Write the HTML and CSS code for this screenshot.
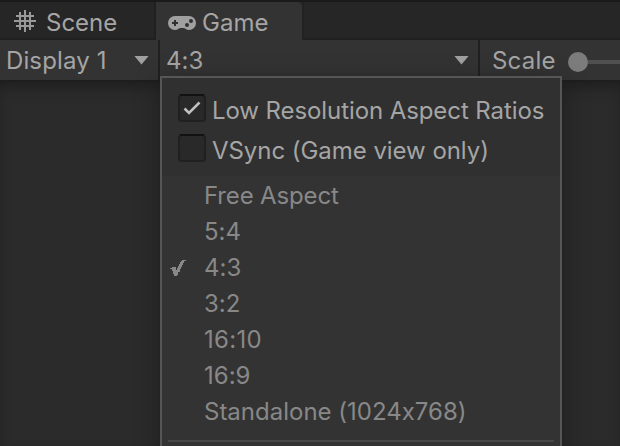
FILE: index.html
```html
<!DOCTYPE html>
<html lang="en">
<head>
<meta charset="utf-8">
<title>Game view</title>
<link rel="stylesheet" href="styles.css">
</head>
<body>
<div class="window">
  <div class="tabs">
    <div class="tab tab-scene">
      <svg class="icon-grid" width="22" height="22" viewBox="0 0 22 22"><path d="M6 2v18M11 0v22M16 2v18M2 6h18M0 11h22M2 16h18" /></svg>
      <span class="scene-label">Scene</span>
    </div>
    <div class="tab tab-game">
      <svg class="icon-pad" width="28" height="14" viewBox="0 0 28 14">
        <path class="pad" d="M7 0H21A7 7 0 0 1 21 14Q19 14 17.5 12.8Q16.5 12 15.5 12H12.5Q11.500 12 10.500 12.8Q9 14 7 14A7 7 0 0 1 7 0Z"/>
        <path class="cross" d="M7 4v6M4 7h6"/>
        <circle class="dot" cx="23" cy="5" r="2"/><circle class="dot" cx="19" cy="9" r="2"/>
      </svg>
      <span class="game-label">Game</span>
    </div>
    <div class="tab-rest"></div>
  </div>
  <div class="toolbar">
    <div class="drop display"><span class="display-label">Display 1</span><i class="arrow"></i></div>
    <div class="drop aspect"><span class="aspect-label">4:3</span><i class="arrow"></i></div>
    <div class="scale"><span class="scale-label">Scale</span><i class="knob"></i><i class="track"></i></div>
  </div>
  <div class="view"></div>
  <div class="popup">
    <div class="options">
      <div class="option"><i class="box"><svg width="28" height="28" viewBox="0 0 28 28"><path d="M6.500 14.500L11 19L21.500 8.500"/></svg></i><span class="low">Low Resolution Aspect Ratios</span></div>
      <div class="option"><i class="box"></i><span class="vsync">VSync (Game view only)</span></div>
    </div>
    <div class="menu">
      <div class="item"><span class="free">Free Aspect</span></div>
      <div class="item"><span>5:4</span></div>
      <div class="item"><svg class="check" width="16" height="16" viewBox="0 0 16 16"><path d="M0 8h2v-1h4v3h1V8h1V6h1V4h1V2h1V1h1V0h4v1h-2v2h-1v2h-1v2h-1v2h-1v3H8v3H7v1H4v-2H3v-3H2V9H0Z"/></svg><span>4:3</span></div>
      <div class="item"><span>3:2</span></div>
      <div class="item"><span class="wide">16:10</span></div>
      <div class="item"><span>16:9</span></div>
      <div class="item"><span class="standalone">Standalone (1024x768)</span></div>
      <div class="divider"></div>
    </div>
  </div>
</div>
</body>
</html>
```
FILE: styles.css
```css
* { box-sizing: border-box; }
body { margin: 0; background: #2b2b2b; font: 24px/36px Inter, sans-serif; font-feature-settings: "calt" 0; color: #a5a5a5; overflow: hidden; }
span { white-space: nowrap; }
svg { display: block; flex: none; }
.window { position: relative; width: 620px; height: 446px; display: flex; flex-direction: column; overflow: hidden; }
.tabs { height: 40px; border-top: 2px solid #1a1a1a; display: flex; background: #262626; flex: none; }
.tab { display: flex; align-items: center; }
.tab-scene { width: 156px; padding-left: 14px; gap: 10px; border-right: 2px solid #202020; border-bottom: 2px solid #202020; }
.tab-game { width: 146px; padding-left: 12px; gap: 6px; background: #333; border-top-right-radius: 5px; }
.tab-rest { flex: 1; border-left: 2px solid #222; border-bottom: 2px solid #202020; }
.tab span { position: relative; top: 3px; }
.tab-game span { top: 2px; }
.icon-grid { position: relative; top: 1px; }
.icon-grid path { fill: none; stroke: #999; stroke-width: 2; }
.icon-pad { position: relative; top: 2px; }
.pad { fill: #a0a0a0; }
.cross { stroke: #303030; stroke-width: 2; }
.dot { fill: #303030; }
.toolbar { height: 40px; display: flex; background: #333; flex: none; }
.drop { display: flex; align-items: center; justify-content: space-between; border-right: 2px solid #202020; }
.toolbar span { position: relative; top: 1px; }
.display { width: 160px; padding: 0 9px 0 6px; }
.display-label { letter-spacing: 0.12px; }
.aspect { width: 320px; padding: 0 9px 0 6px; }
.arrow { width: 15px; height: 9px; background: #a0a0a0; clip-path: polygon(0 0, 100% 0, 50% 100%); }
.scale { flex: 1; display: flex; align-items: center; padding-left: 12px; }
.scale-label { letter-spacing: 0.2px; }
.knob { width: 20px; height: 20px; border-radius: 50%; background: #7c7c7c; margin-left: 12px; position: relative; top: 2px; flex: none; }
.track { flex: 1; height: 4px; background: #505050; position: relative; top: 2px; }
.view { flex: 1; border-top: 2px solid #1e1e1e; background: #2b2b2b; box-shadow: inset 0 8px 16px -6px #1b1b1b; }
.popup { position: absolute; left: 160px; top: 76px; width: 402px; height: 390px; border: 2px solid #565656; background: #333; box-shadow: 0 6px 20px rgba(20, 20, 20, 0.6); }
.options { height: 98px; background: #303030; padding: 16px 0 0 16px; }
.option { display: flex; height: 28px; margin-bottom: 12px; gap: 6px; align-items: center; }
.option span { position: relative; top: 3px; }
.low { letter-spacing: -0.09px; }
.vsync { letter-spacing: -0.05px; }
.box { width: 28px; height: 28px; background: #292929; border: 2px solid #202020; border-top-color: #111; border-radius: 4px; flex: none; }
.box svg { margin: -2px; }
.box path { fill: none; stroke: #c0c0c0; stroke-width: 2.500; }
.menu { padding-top: 2px; color: #888; }
.item { position: relative; height: 36px; padding-left: 42px; }
.free { letter-spacing: -0.15px; }
.wide { letter-spacing: 0.3px; }
.check { position: absolute; left: 8px; top: 10px; fill: #888; shape-rendering: crispEdges; }
.divider { height: 2px; margin: 10px 6px 0; background: #484848; }
```
